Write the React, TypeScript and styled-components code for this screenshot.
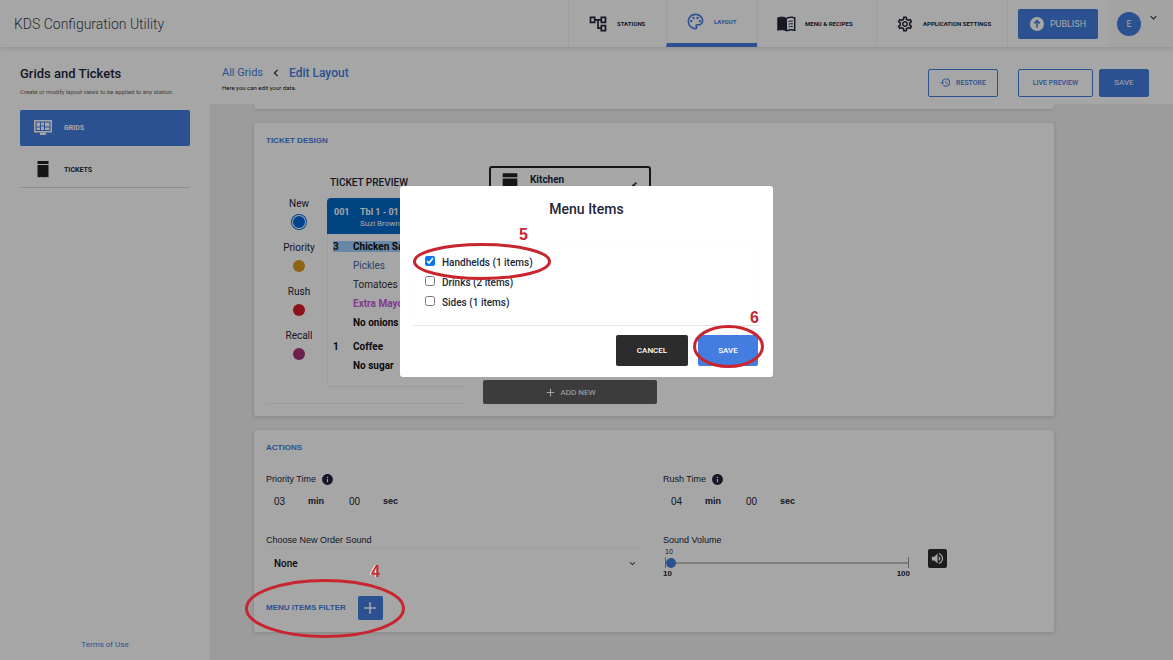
import React from "react";
import styled, { createGlobalStyle } from "styled-components";
import {
  MdOutlineAccountTree,
  MdOutlinePalette,
  MdOutlineSettings,
  MdKeyboardArrowDown,
  MdHistory,
  MdInfo,
  MdVolumeUp,
  MdEdit,
  MdAdd,
  MdChevronLeft,
} from "react-icons/md";

const blue = "#437ddf";
const ink = "#22263a";
const red = "#c8252f";

const GlobalStyle = createGlobalStyle`
  * { box-sizing: border-box; }
  body {
    margin: 0;
    background: #f0f0f0;
    color: ${ink};
    font-family: Roboto, "Liberation Sans", sans-serif;
    font-size: 10px;
  }
  button, input, select { font-family: inherit; margin: 0; }
  a { text-decoration: none; }
  h1, h2, h3, p, ul { margin: 0; padding: 0; }
`;

const Page = styled.div`
  display: flex;
  flex-direction: column;
  min-height: 100vh;
`;

/* Header */
const Header = styled.header`
  position: relative;
  z-index: 2;
  display: flex;
  align-items: stretch;
  height: 47px;
  background: #fff;
  box-shadow: 0 1px 5px rgba(0, 0, 0, 0.16);
`;

const Brand = styled.h1`
  flex: 1;
  align-self: center;
  padding-left: 14px;
  color: #3c3f4c;
  font-size: 14px;
  line-height: 18px;
  font-weight: 300;
`;

const Nav = styled.nav`
  display: flex;
`;

const NavLink = styled.a<{ $width: number; $active?: boolean }>`
  display: flex;
  align-items: center;
  gap: 9px;
  width: ${(p) => p.$width}px;
  padding-left: 19px;
  border-left: 1px solid #f2f2f2;
  border-bottom: ${(p) => (p.$active ? `4px solid ${blue}` : "0")};
  color: ${(p) => (p.$active ? blue : ink)};
  font-size: 6px;
  line-height: 8px;
  font-weight: 700;
  white-space: nowrap;
`;

const HeaderAction = styled.div`
  display: flex;
  align-items: center;
  padding: 0 10px;
  border-left: 1px solid #f2f2f2;
`;

const PublishButton = styled.button`
  display: flex;
  align-items: center;
  justify-content: center;
  gap: 6px;
  width: 80px;
  height: 30px;
  padding: 0;
  border: 0;
  border-radius: 2px;
  background: ${blue};
  color: #fff;
  font-size: 9px;
`;

const UserButton = styled.button`
  display: flex;
  align-items: center;
  gap: 6px;
  width: 65px;
  padding: 0 0 0 9px;
  border: 0;
  background: #fafafa;
  color: #333;
  svg { margin-bottom: 12px; }
`;

const Avatar = styled.span`
  display: grid;
  place-items: center;
  width: 24px;
  height: 24px;
  border-radius: 50%;
  background: ${blue};
  color: #fff;
  font-size: 9px;
`;

/* Body */
const Body = styled.div`
  display: flex;
  flex: 1;
`;

const Sidebar = styled.aside`
  display: flex;
  flex-direction: column;
  width: 210px;
  padding: 18px 20px 9px;
  background: #fff;
`;

const SideTitle = styled.h2`
  font-size: 13px;
  line-height: 18px;
  font-weight: 500;
`;

const SideHint = styled.p`
  margin: 5px 0 14px;
  color: #666;
  font-size: 6px;
  line-height: 8px;
  white-space: nowrap;
`;

const SideLink = styled.a<{ $active?: boolean }>`
  display: flex;
  align-items: center;
  gap: 12px;
  height: 36px;
  margin-bottom: 6px;
  padding-left: 14px;
  border-radius: 2px;
  border-bottom: 1px solid ${(p) => (p.$active ? blue : "#dcdcdc")};
  background: ${(p) => (p.$active ? blue : "#fff")};
  color: ${(p) => (p.$active ? "#fff" : ink)};
  font-size: 7px;
  font-weight: 700;
`;

const Terms = styled.a`
  margin-top: auto;
  color: ${blue};
  font-size: 8px;
  line-height: 12px;
  text-align: center;
`;

const Main = styled.main`
  flex: 1;
  min-width: 0;
`;

const Toolbar = styled.div`
  position: relative;
  display: flex;
  align-items: center;
  gap: 6px;
  height: 57px;
  padding: 14px 24px 0 12px;
  background: #fff;
`;

const Titles = styled.div`
  flex: 1;
  align-self: flex-start;
`;

const Crumbs = styled.div`
  display: flex;
  align-items: center;
  gap: 6px;
  margin-top: 4px;
  font-size: 11px;
  line-height: 16px;
  a { color: ${blue}; }
  strong { color: ${blue}; font-size: 12px; font-weight: 500; }
`;

const CrumbHint = styled.p`
  margin-top: 3px;
  color: #111;
  font-size: 6px;
  line-height: 8px;
`;

const ToolButton = styled.button<{ $solid?: boolean; $width: number; $gapAfter?: boolean }>`
  display: flex;
  align-items: center;
  justify-content: center;
  gap: 5px;
  width: ${(p) => p.$width}px;
  height: 28px;
  margin-right: ${(p) => (p.$gapAfter ? 14 : 0)}px;
  padding: 0;
  border: 1px solid ${blue};
  border-radius: 2px;
  background: ${(p) => (p.$solid ? blue : "#fff")};
  color: ${(p) => (p.$solid ? "#fff" : blue)};
  font-size: ${(p) => (p.$solid ? 8 : 7)}px;
  font-weight: ${(p) => (p.$solid ? 400 : 500)};
`;

const Content = styled.div`
  padding: 0 119px 14px 44px;
`;

const PreviousCard = styled.div`
  height: 5px;
  margin-bottom: 14px;
  border-radius: 0 0 3px 3px;
  background: #fff;
  box-shadow: 0 1px 3px rgba(0, 0, 0, 0.14);
`;

const Card = styled.section`
  margin-bottom: 14px;
  padding: 12px;
  border-radius: 3px;
  background: #fff;
  box-shadow: 0 1px 4px rgba(0, 0, 0, 0.16);
`;

const CardTitle = styled.h2`
  color: ${blue};
  font-family: "Liberation Sans", sans-serif;
  font-size: 8px;
  line-height: 12px;
  font-weight: 700;
`;

const Design = styled.div`
  display: flex;
  gap: 18px;
  height: 243px;
  margin-top: 14px;
`;

const PreviewPanel = styled.div`
  display: flex;
  gap: 11px;
  width: 199px;
  border-bottom: 1px solid #f0f0f0;
  border-left: 1px solid #fafafa;
`;

const States = styled.ul`
  display: flex;
  flex-direction: column;
  width: 49px;
  margin-top: 36px;
  padding-left: 15px;
  list-style: none;
`;

const StateItem = styled.li`
  display: flex;
  flex-direction: column;
  align-items: center;
  gap: 5px;
  height: 44px;
  font-size: 10px;
  line-height: 14px;
`;

const Dot = styled.span<{ $color: string; $selected?: boolean }>`
  width: 12px;
  height: 12px;
  border-radius: 50%;
  background: ${(p) => p.$color};
  box-shadow: ${(p) => (p.$selected ? `0 0 0 1px #fff, 0 0 0 2px ${p.$color}` : "none")};
`;

const TicketColumn = styled.div`
  flex: 1;
`;

const TicketHeading = styled.h3`
  margin: 15px 0 8px 3px;
  font-size: 10px;
  line-height: 14px;
  font-weight: 500;
  white-space: nowrap;
`;

const TicketHead = styled.div`
  display: grid;
  grid-template-columns: 26px 1fr;
  align-content: center;
  height: 36px;
  padding: 3px 0 0 7px;
  border-radius: 4px 4px 0 0;
  background: #0069c8;
  color: #fff;
  font-size: 9px;
  line-height: 12px;
  small { grid-column: 2; font-size: 8px; }
`;

const TicketBody = styled.div`
  height: 153px;
  padding-top: 3px;
  border-bottom: 1px solid #eee;
  border-left: 1px solid #f4f4f4;
`;

const TicketLine = styled.div<{ $color?: string; $weight?: number; $first?: boolean }>`
  display: grid;
  grid-template-columns: 20px 1fr;
  align-items: center;
  height: 19px;
  margin-top: ${(p) => (p.$first ? 5 : 0)}px;
  padding-left: 5px;
  color: ${(p) => p.$color ?? "#111"};
  font-size: 10px;
  line-height: 11px;
  font-weight: ${(p) => p.$weight ?? 700};
  white-space: nowrap;
`;

const Highlight = styled.div`
  display: grid;
  grid-column: 1 / -1;
  grid-template-columns: 20px 1fr;
  background: #9dd0ff;
`;

const StationColumn = styled.div`
  display: flex;
  flex-direction: column;
  justify-content: space-between;
  width: 174px;
`;

const StationCard = styled.div`
  display: flex;
  gap: 12px;
  height: 60px;
  margin: 5px 6px 0;
  padding: 5px 11px;
  border: 2px solid #222;
  border-radius: 3px;
  font-size: 10px;
  line-height: 14px;
  font-weight: 700;
  span { flex: 1; }
  svg:last-child { margin-top: 8px; }
`;

const AddButton = styled.button`
  display: flex;
  align-items: center;
  justify-content: center;
  gap: 3px;
  height: 24px;
  border: 0;
  border-radius: 2px;
  background: #5c5c5c;
  color: #fff;
  font-size: 8px;
`;

/* Actions */
const ActionGrid = styled.div`
  display: grid;
  grid-template-columns: 397px 1fr;
  margin-top: 19px;
`;

const Field = styled.div`
  height: 61px;
`;

const Label = styled.label`
  display: flex;
  align-items: center;
  gap: 5px;
  height: 12px;
  font-family: "Liberation Sans", sans-serif;
  font-size: 9px;
  line-height: 12px;
`;

const TimeRow = styled.div`
  display: grid;
  grid-template-columns: 36px 39px 36px 1fr;
  align-items: center;
  height: 28px;
  margin-top: 2px;
  font-family: "Liberation Sans", sans-serif;
  font-size: 9px;
  font-weight: 700;
  label { padding-left: 6px; }
`;

const TimeInput = styled.input`
  width: 36px;
  height: 28px;
  padding: 0 7px;
  border: 1px solid #fafafa;
  background: #fff;
  color: ${ink};
  font-size: 10px;
`;

const SelectWrap = styled.div`
  display: grid;
  align-items: center;
  width: 375px;
  margin-top: 2px;
  border-top: 1px solid #f8f8f8;
  select, svg { grid-area: 1 / 1; }
  svg { justify-self: end; margin-right: 3px; pointer-events: none; }
`;

const Select = styled.select`
  appearance: none;
  height: 28px;
  padding: 0 8px;
  border: 0;
  background: #fff;
  color: #111;
  font-size: 10px;
  font-weight: 500;
`;

const VolumeRow = styled.div`
  display: flex;
  gap: 18px;
`;

const Volume = styled.div`
  width: 247px;
  font-family: "Liberation Sans", sans-serif;
  font-size: 8px;
  line-height: 11px;
`;

const Slider = styled.input`
  appearance: none;
  display: block;
  width: 244px;
  height: 11px;
  margin: 0 0 0 2px;
  border: solid #999;
  border-width: 0 1px;
  background: linear-gradient(#c4c4c4, #c4c4c4) center / 100% 2px no-repeat;
  &::-webkit-slider-thumb {
    appearance: none;
    width: 10px;
    height: 10px;
    border-radius: 50%;
    background: ${blue};
  }
`;

const VolumeValue = styled.output`
  display: block;
  padding-left: 2px;
  font-size: 7px;
`;

const Range = styled.div`
  display: flex;
  justify-content: space-between;
  font-weight: 700;
`;

const MuteButton = styled.button`
  display: grid;
  place-items: center;
  width: 19px;
  height: 19px;
  margin-top: 3px;
  padding: 0;
  border: 0;
  border-radius: 2px;
  background: #2b2b2b;
  color: #fff;
`;

const FilterRow = styled.div`
  position: relative;
  display: flex;
  align-items: center;
  gap: 12px;
  width: 150px;
  height: 25px;
`;

const PlusButton = styled.button`
  display: grid;
  place-items: center;
  width: 25px;
  height: 24px;
  padding: 0;
  border: 0;
  border-radius: 2px;
  background: ${blue};
  color: #fff;
`;

/* Dialog */
const Overlay = styled.div`
  position: fixed;
  inset: 0;
  z-index: 10;
  display: flex;
  align-items: flex-start;
  justify-content: center;
  padding-top: 186px;
  background: rgba(0, 0, 0, 0.35);
`;

const Dialog = styled.div`
  width: 373px;
  padding: 14px 13px 11px;
  border-radius: 3px;
  background: #fff;
`;

const DialogTitle = styled.h2`
  font-size: 14px;
  line-height: 18px;
  font-weight: 500;
  text-align: center;
`;

const Options = styled.div`
  margin-top: 27px;
  padding: 7px 11px 12px;
  border: 1px solid #fcfcfc;
  border-bottom-color: #e6e6e6;
`;

const Option = styled.label`
  position: relative;
  display: flex;
  align-items: center;
  gap: 7px;
  width: 110px;
  height: 20px;
  font-size: 10px;
  line-height: 14px;
  font-weight: 500;
  white-space: nowrap;
  input { width: 10px; height: 10px; margin-bottom: 4px; accent-color: #0a75f0; }
`;

const DialogActions = styled.div`
  display: flex;
  justify-content: flex-end;
  gap: 10px;
  margin-top: 9px;
  padding-right: 2px;
`;

const DialogButton = styled.button<{ $primary?: boolean }>`
  display: block;
  width: ${(p) => (p.$primary ? 60 : 72)}px;
  height: 31px;
  padding: 0;
  border: 0;
  border-radius: 2px;
  background: ${(p) => (p.$primary ? blue : "#2c2c2c")};
  color: #fff;
  font-size: 8px;
  font-weight: 500;
`;

const Anchor = styled.div`
  position: relative;
`;

/* Callouts drawn over the page */
const Ring = styled.svg<{ $left: number; $top: number }>`
  position: absolute;
  z-index: 20;
  left: ${(p) => p.$left}px;
  top: ${(p) => p.$top}px;
  overflow: visible;
  pointer-events: none;
  ellipse { fill: none; stroke: ${red}; stroke-width: 3; }
`;

const StepNumber = styled.span<{ $left: number; $top: number }>`
  position: absolute;
  z-index: 20;
  left: ${(p) => p.$left}px;
  top: ${(p) => p.$top}px;
  color: ${red};
  font-family: "Liberation Sans", sans-serif;
  font-size: 16px;
  line-height: 18px;
  font-weight: 700;
  text-shadow: -1px 0 #fff;
`;

function Callout(p: { step: string; width: number; height: number; left: number; top: number; numLeft: number; numTop: number }) {
  return (
    <>
      <Ring $left={p.left} $top={p.top} width={p.width} height={p.height} aria-hidden="true">
        <ellipse cx={p.width / 2} cy={p.height / 2} rx={p.width / 2 - 1.5} ry={p.height / 2 - 1.5} />
      </Ring>
      <StepNumber $left={p.numLeft} $top={p.numTop}>{p.step}</StepNumber>
    </>
  );
}

const BookIcon = () => (
  <svg width="19" height="16" viewBox="0 0 19 16" fill="none" stroke="currentColor">
    <path d="M9.5 2.400C7.500 1 3.500.7.800 1.800v12.400c2.700-.9 6.700-.7 8.700.8z" fill="currentColor" />
    <path d="M9.500 2.400c2-1.400 6-1.700 8.200-.6v12.400c-2.200-.9-6.200-.7-8.200.8" strokeWidth="1.500" />
    <path d="M11.500 5.500c1.300-.5 3-.6 4.300-.4M11.500 8.200c1.300-.5 3-.6 4.300-.4M11.500 10.900c1.300-.5 3-.6 4.300-.4" />
  </svg>
);

const PublishIcon = () => (
  <svg width="14" height="14" viewBox="0 0 14 14">
    <circle cx="7" cy="7" r="7" fill="#fff" />
    <path d="M7 10.800V4M4.200 6.400L7 3.600l2.800 2.800" fill="none" stroke={blue} strokeWidth="1.500" />
  </svg>
);

const GridIcon = () => (
  <svg width="18" height="15" viewBox="0 0 18 15" fill="currentColor">
    <path d="M0 0h18v12.500H0zM1.500 1.500V11h15V1.500z" fillRule="evenodd" />
    <path d="M2.500 2.500h3.500v4H2.500zM7 2.500h3v3H7zM11 2.500h4.500v4H11zM2.500 7.500H6V10H2.500zM7 6.500h3V10H7zM11 7.500h4.500V10H11zM6 12.500h6V15H6z" />
  </svg>
);

const TicketIcon = ({ width, height }: { width: number; height: number }) => (
  <svg width={width} height={height} viewBox="0 0 12 17" fill="#222">
    <path d="M.5 0h11v3H.5zM.5 4h11v12.500l-1-.7-1.200.7-1.100-.7-1.100.7-1.100-.7-1.100.7-1.100-.7-1.100.7-1.200-.7-1 .7z" />
  </svg>
);

const states = [
  { name: "New", color: "#0069dc", selected: true },
  { name: "Priority", color: "#d79a1c" },
  { name: "Rush", color: "#d41c28" },
  { name: "Recall", color: "#a83277" },
];

const menuGroups = [
  { name: "Handhelds", count: 1, checked: true },
  { name: "Drinks", count: 2 },
  { name: "Sides", count: 1 },
];

function TimeField({ id, label, minutes }: { id: string; label: string; minutes: string }) {
  return (
    <Field>
      <Label htmlFor={`${id}-min`}>{label} <MdInfo size={13} /></Label>
      <TimeRow>
        <TimeInput id={`${id}-min`} defaultValue={minutes} />
        <label htmlFor={`${id}-min`}>min</label>
        <TimeInput id={`${id}-sec`} defaultValue="00" />
        <label htmlFor={`${id}-sec`}>sec</label>
      </TimeRow>
    </Field>
  );
}

export default function App() {
  return (
    <Page>
      <GlobalStyle />
      <Header>
        <Brand>KDS Configuration Utility</Brand>
        <Nav>
          <NavLink href="#stations" $width={98}><MdOutlineAccountTree size={20} />STATIONS</NavLink>
          <NavLink href="#layout" $width={91} $active><MdOutlinePalette size={19} />LAYOUT</NavLink>
          <NavLink href="#menu" $width={119}><BookIcon />MENU &amp; RECIPES</NavLink>
          <NavLink href="#settings" $width={131}><MdOutlineSettings size={18} />APPLICATION SETTINGS</NavLink>
        </Nav>
        <HeaderAction>
          <PublishButton><PublishIcon />PUBLISH</PublishButton>
        </HeaderAction>
        <UserButton aria-label="Account"><Avatar>E</Avatar><MdKeyboardArrowDown size={13} /></UserButton>
      </Header>
      <Body>
        <Sidebar>
          <SideTitle>Grids and Tickets</SideTitle>
          <SideHint>Create or modify layout views to be applied to any station.</SideHint>
          <SideLink href="#grids" $active><GridIcon />GRIDS</SideLink>
          <SideLink href="#tickets"><TicketIcon width={18} height={17} />TICKETS</SideLink>
          <Terms href="#terms">Terms of Use</Terms>
        </Sidebar>
        <Main>
          <Toolbar>
            <Titles>
              <Crumbs>
                <a href="#all">All Grids</a>
                <MdChevronLeft size={14} />
                <strong>Edit Layout</strong>
              </Crumbs>
              <CrumbHint>Here you can edit your data.</CrumbHint>
            </Titles>
            <ToolButton $width={70} $gapAfter><MdHistory size={11} />RESTORE</ToolButton>
            <ToolButton $width={75}>LIVE PREVIEW</ToolButton>
            <ToolButton $width={50} $solid>SAVE</ToolButton>
          </Toolbar>
          <Content>
            <PreviousCard />
            <Card>
              <CardTitle>TICKET DESIGN</CardTitle>
              <Design>
                <PreviewPanel>
                  <States>
                    {states.map((s) => (
                      <StateItem key={s.name}>{s.name}<Dot $color={s.color} $selected={s.selected} /></StateItem>
                    ))}
                  </States>
                  <TicketColumn>
                    <TicketHeading>TICKET PREVIEW</TicketHeading>
                    <TicketHead><b>001</b><b>Tbl 1 - 01</b><small>Suzi Brown</small></TicketHead>
                    <TicketBody>
                      <TicketLine><Highlight><span>3</span><span>Chicken Sand</span></Highlight></TicketLine>
                      <TicketLine $color="#44699f" $weight={400}><span /><span>Pickles</span></TicketLine>
                      <TicketLine $color="#333" $weight={400}><span /><span>Tomatoes</span></TicketLine>
                      <TicketLine $color="#c65ad8"><span /><span>Extra Mayo</span></TicketLine>
                      <TicketLine><span /><span>No onions</span></TicketLine>
                      <TicketLine $first><span>1</span><span>Coffee</span></TicketLine>
                      <TicketLine><span /><span>No sugar</span></TicketLine>
                    </TicketBody>
                  </TicketColumn>
                </PreviewPanel>
                <StationColumn>
                  <StationCard>
                    <TicketIcon width={16} height={23} />
                    <span>Kitchen</span>
                    <MdEdit size={10} />
                  </StationCard>
                  <AddButton><MdAdd size={13} />ADD NEW</AddButton>
                </StationColumn>
              </Design>
            </Card>
            <Card>
              <CardTitle>ACTIONS</CardTitle>
              <ActionGrid>
                <TimeField id="priority" label="Priority Time" minutes="03" />
                <TimeField id="rush" label="Rush Time" minutes="04" />
                <Field>
                  <Label htmlFor="sound">Choose New Order Sound</Label>
                  <SelectWrap>
                    <Select id="sound" defaultValue="None"><option>None</option></Select>
                    <MdKeyboardArrowDown size={11} />
                  </SelectWrap>
                </Field>
                <Field>
                  <Label htmlFor="volume">Sound Volume</Label>
                  <VolumeRow>
                    <Volume>
                      <VolumeValue htmlFor="volume">10</VolumeValue>
                      <Slider id="volume" type="range" min={10} max={100} defaultValue={10} />
                      <Range><span>10</span><span>100</span></Range>
                    </Volume>
                    <MuteButton aria-label="Play sound"><MdVolumeUp size={15} /></MuteButton>
                  </VolumeRow>
                </Field>
              </ActionGrid>
              <FilterRow>
                <CardTitle>MENU ITEMS FILTER</CardTitle>
                <PlusButton aria-label="Add menu items filter"><MdAdd size={20} /></PlusButton>
                <Callout step="4" width={160} height={59} left={-21} top={-16} numLeft={105} numTop={-32} />
              </FilterRow>
            </Card>
          </Content>
        </Main>
      </Body>
      <Overlay>
        <Dialog role="dialog" aria-modal="true" aria-labelledby="dialog-title">
          <DialogTitle id="dialog-title">Menu Items</DialogTitle>
          <Options>
            {menuGroups.map((g) => (
              <Option key={g.name}>
                <input type="checkbox" defaultChecked={g.checked} />
                {g.name} ({g.count} items)
                {g.checked && <Callout step="5" width={138} height={37} left={-12} top={-10} numLeft={94} numTop={-27} />}
              </Option>
            ))}
          </Options>
          <DialogActions>
            <DialogButton>CANCEL</DialogButton>
            <Anchor>
              <DialogButton $primary>SAVE</DialogButton>
              <Callout step="6" width={71} height={43} left={-5} top={-10} numLeft={52} numTop={-26} />
            </Anchor>
          </DialogActions>
        </Dialog>
      </Overlay>
    </Page>
  );
}
